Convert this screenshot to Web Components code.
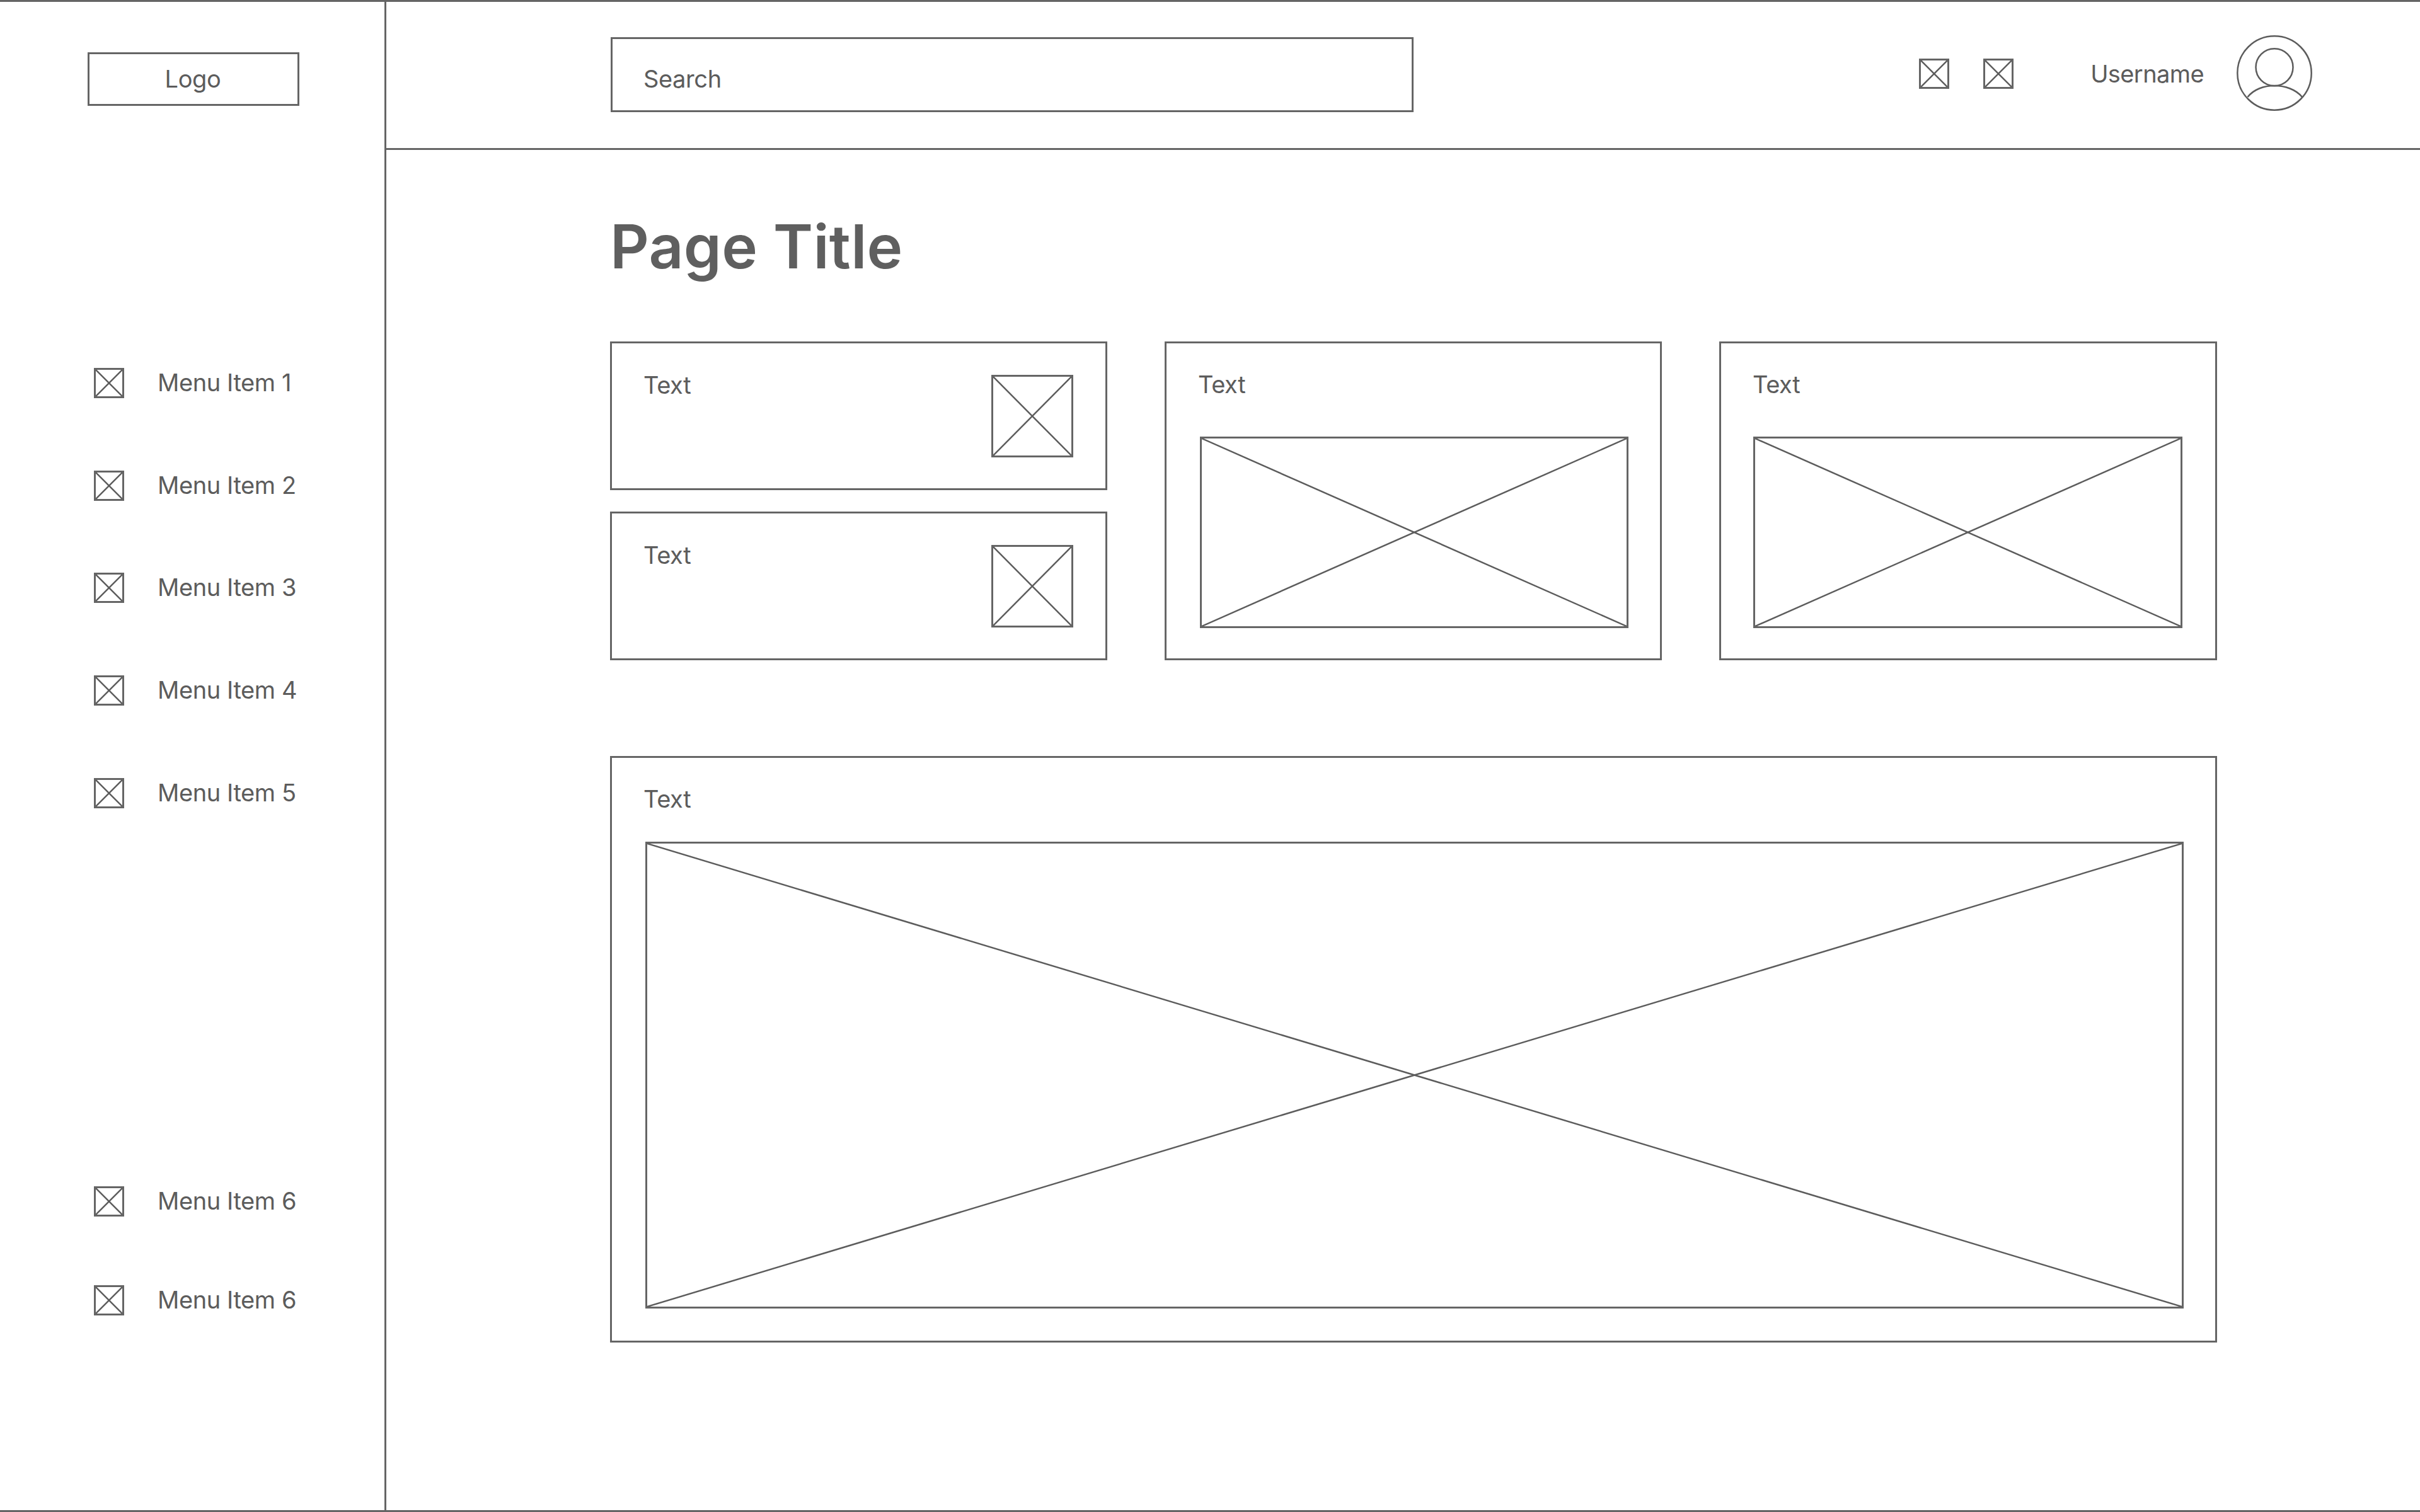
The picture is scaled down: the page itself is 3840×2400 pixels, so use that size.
<!DOCTYPE html>
<html><head><meta charset="utf-8"><title>Wireframe dashboard</title>
<style>
html,body{margin:0;padding:0;background:#fff}
body{font-family:Inter,"Liberation Sans",sans-serif;color:#5c5c5c;letter-spacing:-.4px}
</style></head><body>
<wf-app>
  <wf-sidebar slot="sidebar">
    <wf-nav-item>Menu Item 1</wf-nav-item>
    <wf-nav-item>Menu Item 2</wf-nav-item>
    <wf-nav-item>Menu Item 3</wf-nav-item>
    <wf-nav-item>Menu Item 4</wf-nav-item>
    <wf-nav-item>Menu Item 5</wf-nav-item>
    <wf-nav-item slot="bottom">Menu Item 6</wf-nav-item>
    <wf-nav-item slot="bottom">Menu Item 6</wf-nav-item>
  </wf-sidebar>
  <wf-topbar slot="topbar"></wf-topbar>
  <wf-content slot="content">
    <wf-stack slot="a">
      <wf-card-small>Text</wf-card-small>
      <wf-card-small>Text</wf-card-small>
    </wf-stack>
    <wf-card-image slot="b">Text</wf-card-image>
    <wf-card-image slot="c">Text</wf-card-image>
    <wf-card-wide slot="wide">Text</wf-card-wide>
  </wf-content>
</wf-app>
<script>
const B='3px solid #656565';
function def(name, html){
  customElements.define(name, class extends HTMLElement{
    constructor(){super();this.attachShadow({mode:'open'}).innerHTML=html;}
  });
}
def('wf-box',`<style>
:host{display:block;box-sizing:border-box;border:${B};line-height:0}
svg{display:block;width:100%;height:100%}
line{stroke:#5c5c5c;stroke-width:2.5;vector-effect:non-scaling-stroke}
</style><svg viewBox="0 0 100 100" preserveAspectRatio="none" aria-hidden="true"><line x1="0" y1="0" x2="100" y2="100"/><line x1="100" y1="0" x2="0" y2="100"/></svg>`);

def('wf-app',`<style>
:host{display:flex;box-sizing:border-box;width:3840px;height:2400px;border-top:${B};border-bottom:${B};background:#fff}
.main{flex:1;display:flex;flex-direction:column;min-width:0}
</style><slot name="sidebar"></slot><div class="main"><slot name="topbar"></slot><slot name="content"></slot></div>`);

def('wf-sidebar',`<style>
:host{display:flex;flex-direction:column;box-sizing:border-box;width:613px;border-right:${B};padding:80px 0 0 0;flex:none}
.logo{box-sizing:border-box;width:336px;height:85px;margin-left:139px;border:${B};display:flex;align-items:center;justify-content:center;font-size:38px;line-height:1;padding:0 2px 2px 0}
nav{display:flex;flex-direction:column;gap:114.7px;margin-top:416px}
.bottom{display:flex;flex-direction:column;gap:109px;margin-top:600px}
</style><div class="logo">Logo</div><nav><slot></slot></nav><div class="bottom"><slot name="bottom"></slot></div>`);

def('wf-nav-item',`<style>
:host{display:flex;align-items:center;height:48px;padding-left:149px;font-size:38px;white-space:nowrap}
wf-box{width:48px;height:48px;flex:none;margin-right:53px}
span{margin-top:-2px}
</style><wf-box></wf-box><span><slot></slot></span>`);

def('wf-topbar',`<style>
:host{display:flex;align-items:center;box-sizing:border-box;height:235px;border-bottom:${B};padding:0 171px 4px 356px;font-size:38px}
.search{box-sizing:border-box;width:1274px;height:119px;margin-top:3px;border:${B};padding:12px 0 0 49px;display:flex;align-items:center}
.icons{display:flex;gap:54px;margin-left:auto}
wf-box{width:48px;height:48px}
.user{margin-left:122px;white-space:nowrap;letter-spacing:-.6px}
svg{display:block;width:120px;height:120px;margin:-2px 0 0 52px;flex:none}
circle,path{fill:none;stroke:#5c5c5c;stroke-width:2.5}
</style><div class="search">Search</div>
<div class="icons"><wf-box></wf-box><wf-box></wf-box></div>
<span class="user">Username</span>
<svg viewBox="0 0 120 120" aria-hidden="true"><circle cx="60" cy="60" r="58.700"/><circle cx="60" cy="50.700" r="29.500"/><path d="M17.500 98C27 86 43 80 60 80S94 86 104 98"/></svg>`);

def('wf-content',`<style>
:host{display:block;box-sizing:border-box;padding:95px 0 0 355px}
h1{margin:0;font-size:96px;line-height:116px;font-weight:600;letter-spacing:.3px;color:#5f5f5f}
.row{display:grid;grid-template-columns:789px 789px 790px;column-gap:91px;margin-top:93px;height:506px}
.wide{margin-top:152px;width:2550px}
</style><h1>Page Title</h1>
<div class="row"><slot name="a"></slot><slot name="b"></slot><slot name="c"></slot></div>
<div class="wide"><slot name="wide"></slot></div>`);

def('wf-stack',`<style>:host{display:flex;flex-direction:column;justify-content:space-between;height:506px}</style><slot></slot>`);

def('wf-card-small',`<style>
:host{display:flex;justify-content:space-between;box-sizing:border-box;height:236px;border:${B};padding:50px 51px 0 50px;font-size:38px}
span{line-height:46px;margin-top:-7px}
wf-box{width:130px;height:131px;flex:none}
</style><span><slot></slot></span><wf-box></wf-box>`);

def('wf-card-image',`<style>
:host{display:block;box-sizing:border-box;height:506px;border:${B};padding:42px 50px 0 53px;font-size:38px}
:host([slot="c"]){padding-left:51px;padding-right:52px}
:host([slot="c"]) span{margin-left:-1px}
span{display:block;line-height:46px;margin-left:-3px}
wf-box{height:304px;margin-top:60px}
</style><span><slot></slot></span><wf-box></wf-box>`);

def('wf-card-wide',`<style>
:host{display:block;box-sizing:border-box;height:931px;border:${B};padding:42px 50px 0 53px;font-size:38px}
span{display:block;line-height:46px;margin-left:-3px}
wf-box{height:741px;margin-top:45px}
</style><span><slot></slot></span><wf-box></wf-box>`);
</script>
</body></html>
